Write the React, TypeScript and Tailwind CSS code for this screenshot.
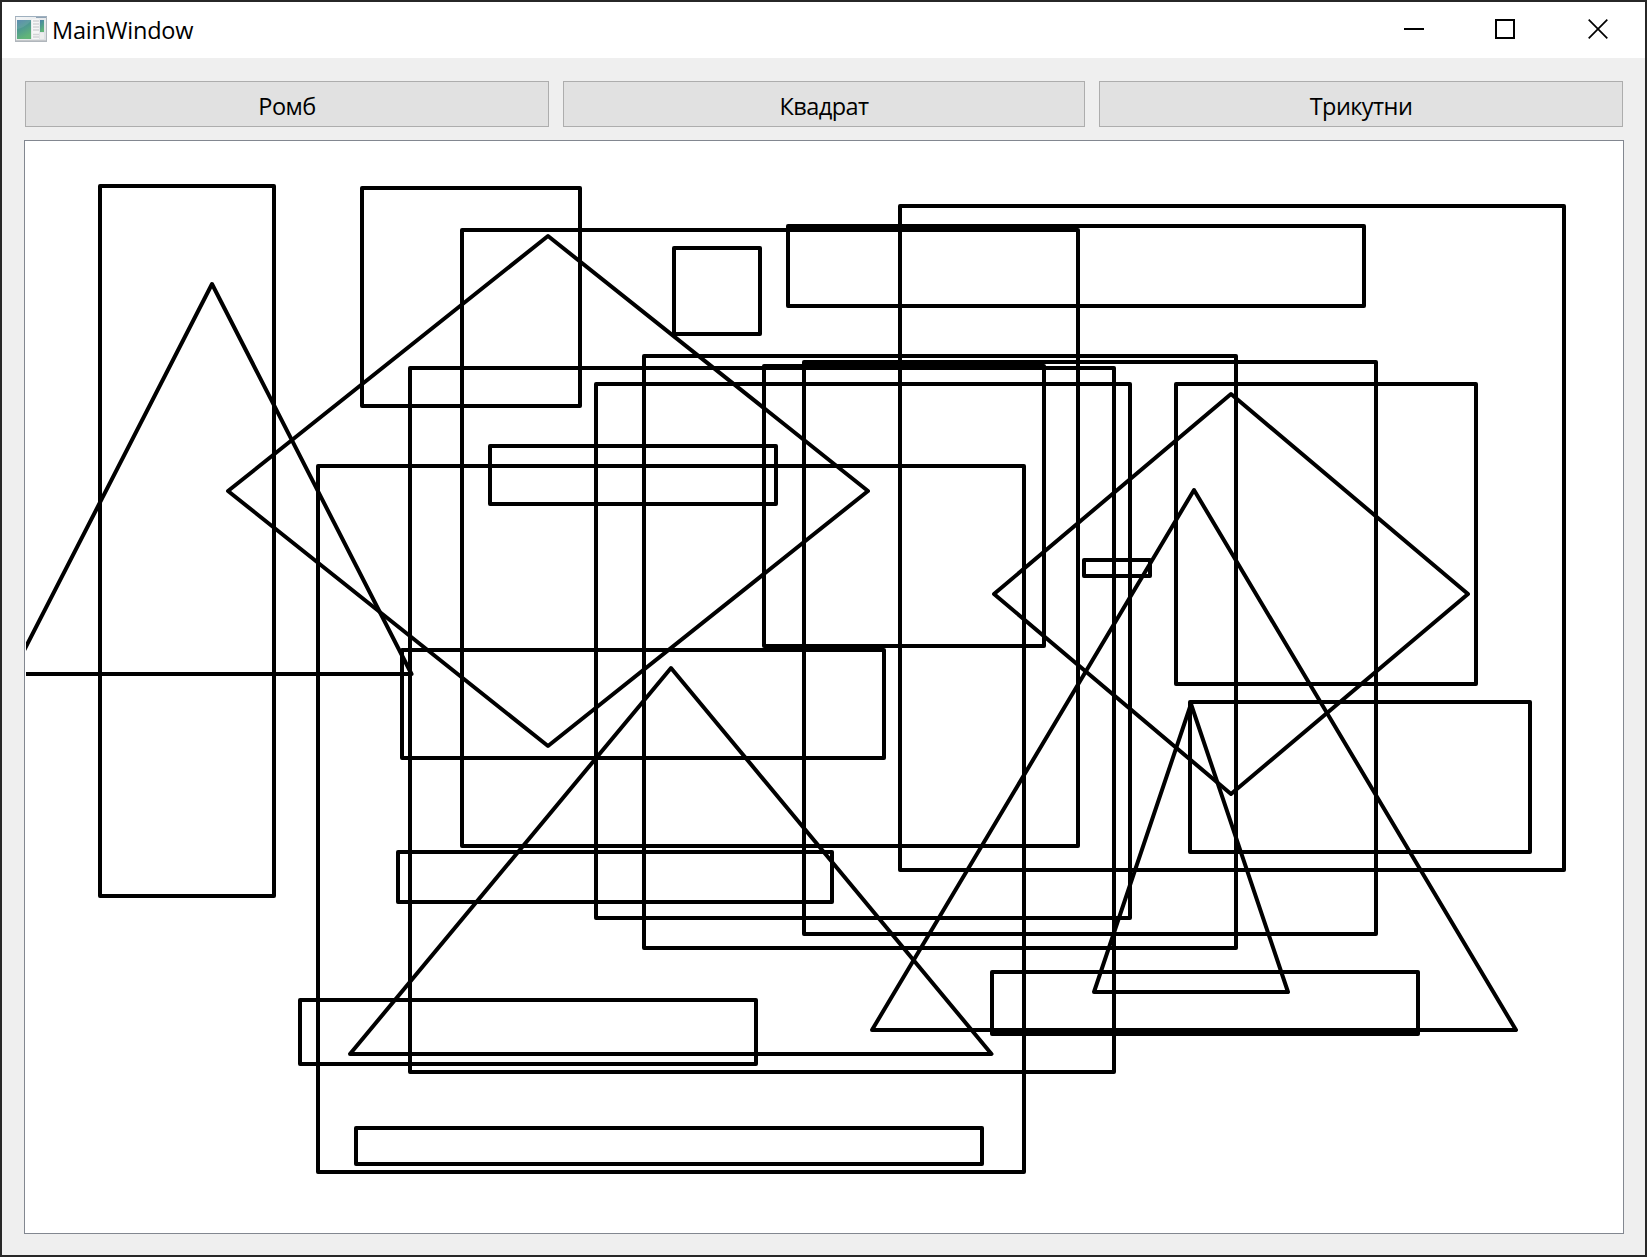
import React from "react";

type Box = [number, number, number, number];

// Rectangles as left, top, right, bottom in window pixels.
const boxes: Box[] = [
  [100, 186, 274, 896],
  [362, 188, 580, 406],
  [462, 230, 1078, 846],
  [410, 368, 1114, 1072],
  [318, 466, 1024, 1172],
  [490, 446, 776, 504],
  [674, 248, 760, 334],
  [788, 226, 1364, 306],
  [900, 206, 1564, 870],
  [644, 356, 1236, 948],
  [596, 384, 1130, 918],
  [764, 366, 1044, 646],
  [804, 362, 1376, 934],
  [1176, 384, 1476, 684],
  [1084, 560, 1150, 576],
  [1190, 702, 1530, 852],
  [402, 650, 884, 758],
  [398, 852, 832, 902],
  [300, 1000, 756, 1064],
  [356, 1128, 982, 1164],
  [992, 972, 1418, 1034],
];

// Rhombuses and triangles.
const polygons = [
  "548,236 868,491 548,746 228,491",
  "1231,394 1468,594 1231,794 994,594",
  "212,284 411.500,674 12,674",
  "671,668 991.500,1054 350,1054",
  "1194,490 1516,1030 872,1030",
  "1191,704 1288,992 1094,992",
];

function AppIcon() {
  return (
    <svg width="32" height="26" viewBox="0 0 32 26" className="block shrink-0">
      <defs>
        <linearGradient id="pane" x1="0" y1="0" x2="0.4" y2="1">
          <stop offset="0" stopColor="#4a80a8" />
          <stop offset="0.5" stopColor="#4f9a90" />
          <stop offset="1" stopColor="#62b578" />
        </linearGradient>
        <linearGradient id="frame" x1="0" y1="0" x2="1" y2="1">
          <stop offset="0" stopColor="#f4f6f7" />
          <stop offset="1" stopColor="#dcdfe2" />
        </linearGradient>
      </defs>
      <rect x="0.5" y="0.5" width="31" height="25" fill="url(#frame)" stroke="#b0b6bc" />
      <path d="M0 0.5H32" stroke="#9fb0bf" />
      <path d="M21 1.5H31" stroke="#8fa3b5" />
      <path d="M1 24.5H31" stroke="#c3c6c9" />
      <rect x="2" y="4" width="14" height="19" fill="url(#pane)" />
      <path d="M2 13Q9 12 16 5V4H2Z" fill="#ffffff" opacity="0.1" />
      <rect x="17" y="3" width="7" height="20" fill="#f6f6f6" />
      <path d="M18 5H24M18 8H24M18 11H24M18 14H24M18 18.500H24M18 21H24" stroke="#d2d4d6" strokeWidth="1.3" />
      <rect x="25" y="4" width="4" height="12" fill="url(#pane)" />
      <rect x="25" y="17" width="4" height="6" fill="#eeeeee" />
    </svg>
  );
}

function PushButton({ label, width }: { label: string; width: string }) {
  return (
    <button
      className={`${width} flex h-[46px] shrink-0 items-center justify-center border border-[#adadad] bg-[#e1e1e1] pt-[5px] text-[23.5px] leading-none tracking-[-0.55px]`}
    >
      {label}
    </button>
  );
}

export default function App() {
  return (
    <div className="flex h-[1257px] w-[1647px] flex-col overflow-hidden border-2 border-[#272727] bg-[#efefef] font-['Open_Sans','Noto_Sans',sans-serif] text-black">
      <header className="flex h-14 shrink-0 items-center justify-between bg-white pl-[13px] pr-[37px]">
        <div className="flex items-center gap-[5px]">
          <div className="-mt-0.5">
            <AppIcon />
          </div>
          <span className="pt-0.5 text-[23.5px] leading-none tracking-[-0.2px]">MainWindow</span>
        </div>
        <svg width="204" height="20" viewBox="1404 19 204 20" className="-mt-0.5 block" fill="none" stroke="#000" strokeWidth="2">
          <path d="M1404 29H1424" />
          <path d="M1496 20H1514V38H1496Z" />
          <path d="M1588.700 19.700L1607.300 38.300M1607.300 19.700L1588.700 38.300" strokeWidth="1.700" />
        </svg>
      </header>
      <div className="flex shrink-0 gap-[14px] pl-[23px] pt-[23px]">
        <PushButton label="Ромб" width="w-[524px]" />
        <PushButton label="Квадрат" width="w-[522px]" />
        <PushButton label="Трикутни" width="w-[524px]" />
      </div>
      <main className="ml-[22px] mt-[13px] h-[1094px] w-[1600px] shrink-0 border border-[#828790] bg-white px-px">
        <svg
          width="1596"
          height="1092"
          viewBox="26 141 1596 1092"
          className="block"
          fill="none"
          stroke="#000"
          strokeWidth="4"
          strokeLinejoin="round"
        >
          {boxes.map(([l, t, r, b], i) => (
            <rect key={i} x={l} y={t} width={r - l} height={b - t} />
          ))}
          {polygons.map((p) => (
            <polygon key={p} points={p} />
          ))}
        </svg>
      </main>
    </div>
  );
}
